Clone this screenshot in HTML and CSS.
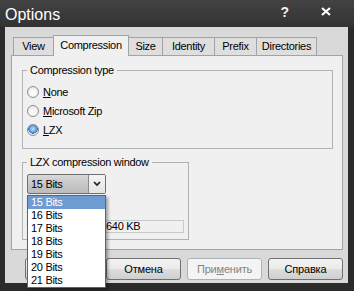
FILE: index.html
```html
<!DOCTYPE html>
<html lang="en">
<head>
    <meta charset="UTF-8">
    <title>Options</title>
    <link rel="stylesheet" href="styles.css">
</head>
<body>

<div class="window">
    <div class="titlebar">
        <span class="title">Options</span>
        <span class="caption-help">?</span>
        <span class="caption-close">
            <svg width="10" height="9" viewBox="0 0 10 9">
                <path d="M1 1 L9 8 M9 1 L1 8" stroke="#fff" stroke-width="2.2" fill="none"/>
            </svg>
        </span>
    </div>

    <div class="client">
        <div class="tabs">
            <div class="tab tab-view">View</div>
            <div class="tab tab-compression tab-active">Compression</div>
            <div class="tab tab-size">Size</div>
            <div class="tab tab-identity">Identity</div>
            <div class="tab tab-prefix">Prefix</div>
            <div class="tab tab-dirs">Directories</div>
        </div>

        <div class="panel">
            <fieldset class="group group-type">
                <legend>Compression type</legend>
                <div class="radio-row"><span class="radio"></span><span><u>N</u>one</span></div>
                <div class="radio-row"><span class="radio"></span><span><u>M</u>icrosoft Zip</span></div>
                <div class="radio-row"><span class="radio radio-checked"></span><span><u>L</u>ZX</span></div>
            </fieldset>

            <fieldset class="group group-window">
                <legend>LZX compression window</legend>
                <div class="combo-wrap">
                    <div class="combo">
                        <span class="combo-text">15 Bits</span>
                        <span class="combo-btn">
                            <svg width="8" height="6" viewBox="0 0 8 6">
                                <path d="M1 1 L4 4 L7 1" stroke="#1e1e1e" stroke-width="1.7" fill="none"/>
                            </svg>
                        </span>
                    </div>
                    <ul class="combo-list">
                        <li class="selected">15 Bits</li>
                        <li>16 Bits</li>
                        <li>17 Bits</li>
                        <li>18 Bits</li>
                        <li>19 Bits</li>
                        <li>20 Bits</li>
                        <li>21 Bits</li>
                    </ul>
                </div>
                <div class="size-field">640 KB</div>
            </fieldset>
        </div>

        <div class="buttons">
            <button class="btn">OK</button>
            <button class="btn">Отмена</button>
            <button class="btn btn-disabled">При<u>м</u>енить</button>
            <button class="btn">Справка</button>
        </div>
    </div>
</div>

</body>
</html>
```

FILE: styles.css
```css
body {
    margin: 0;
    background: #2d2d2d;
    font-family: 'Liberation Sans', Arial, sans-serif;
    font-size: 11px;
    color: #000;
}

.window {
    width: 354px;
    height: 291px;
    background: #2b2b2b;
    box-sizing: border-box;
}

.titlebar {
    height: 27px;
    display: flex;
    align-items: flex-start;
    background: linear-gradient(#434343, #323232);
    color: #fff;
}

.title {
    font-size: 16px;
    line-height: 25px;
    padding: 2px 0 0 5px;
}

.caption-help {
    margin-left: auto;
    font-size: 14px;
    font-weight: bold;
    line-height: 14px;
    padding-top: 5px;
    color: #f2f2f2;
}

.caption-close {
    margin: 7px 23px 0 32px;
    display: flex;
}

.client {
    margin: 0 6px 0 5px;
    height: 256px;
    background: #d9d9d9;
    padding: 8px 5px 0 6px;
    box-sizing: border-box;
}

.tabs {
    display: flex;
    align-items: flex-end;
    height: 20px;
    padding-left: 2px;
    letter-spacing: -0.3px;
}

.tab {
    box-sizing: border-box;
    height: 18px;
    line-height: 17px;
    text-align: center;
    border: 1px solid #a3a3a3;
    border-bottom: none;
    background: #dedede;
    margin-left: -1px;
}

.tab-view { width: 41px; margin-left: 0; }
.tab-compression { width: 76px; }
.tab-size { width: 35px; }
.tab-identity { width: 53px; }
.tab-prefix { width: 43px; }
.tab-dirs { width: 61px; }

.tab-active {
    height: 21px;
    line-height: 18px;
    margin-bottom: -1px;
    background: #f0f0f0;
    position: relative;
    z-index: 1;
}

.panel {
    height: 195px;
    box-sizing: border-box;
    border: 1px solid #a3a3a3;
    background: #f0f0f0;
    padding: 8px 0 0 10px;
}

.group {
    margin: 0;
    box-sizing: border-box;
    border: 1px solid #b2b2b2;
    padding: 5px 0 9px 4px;
    letter-spacing: -0.3px;
}

.group legend {
    padding: 0 3px;
    line-height: 13px;
}

.group-type {
    width: 311px;
}

.group-window {
    width: 167px;
    margin-top: 7px;
    padding-bottom: 6px;
}

.radio-row {
    display: flex;
    align-items: center;
    height: 19px;
    gap: 4px;
}

.radio-row u,
.btn u {
    text-decoration-thickness: 1px;
    text-underline-offset: 1px;
}

.radio {
    width: 12px;
    height: 12px;
    box-sizing: border-box;
    border: 1px solid #8e8f8f;
    border-radius: 50%;
    background: radial-gradient(circle at 50% 60%, #fafafa 30%, #dcdcdc 100%);
}

.radio-checked {
    background:
        radial-gradient(circle at 50% 40%, #bfe0ff 0%, #5d9be0 45%, #2b6fc1 58%, transparent 62%),
        radial-gradient(circle at 50% 60%, #fafafa 30%, #dcdcdc 100%);
}

.combo-wrap {
    position: relative;
    width: 79px;
}

.combo {
    height: 20px;
    box-sizing: border-box;
    border: 1px solid #707070;
    border-radius: 2px;
    display: flex;
    background: linear-gradient(#d8d8d8, #c4c4c4 60%, #bcbcbc);
}

.combo-text {
    flex: 1;
    line-height: 18px;
    padding-left: 3px;
}

.combo-btn {
    width: 16px;
    border-left: 1px solid #8a8a8a;
    background: linear-gradient(#f4f4f4, #e4e4e4);
    display: flex;
    align-items: center;
    justify-content: center;
}

.combo-list {
    position: absolute;
    top: 21px;
    left: 0;
    width: 79px;
    margin: 0;
    padding: 0;
    list-style: none;
    box-sizing: border-box;
    border: 1px solid #646464;
    background: #fff;
    box-shadow: 2px 2px 3px rgba(0, 0, 0, 0.35);
    z-index: 5;
}

.combo-list li {
    height: 13px;
    line-height: 13px;
    padding-left: 3px;
}

.combo-list li.selected {
    background: #6d9bd2;
    color: #fff;
}

.size-field {
    margin: 26px 0 0 77px;
    width: 80px;
    height: 13px;
    box-sizing: border-box;
    border: 1px solid #c9c9c9;
    line-height: 11px;
    padding-left: 1px;
}

.buttons {
    display: flex;
    justify-content: flex-end;
    gap: 6px;
    margin-top: 8px;
}

.btn {
    width: 75px;
    height: 22px;
    padding: 0;
    font-family: 'Liberation Sans', Arial, sans-serif;
    font-size: 11px;
    letter-spacing: -0.2px;
    color: #000;
    border: 1px solid #707070;
    border-radius: 3px;
    background: linear-gradient(#f2f2f2 0%, #ebebeb 48%, #dddddd 52%, #cfcfcf 100%);
}

.btn-disabled {
    color: #838383;
    border-color: #adb2b5;
    background: #f4f4f4;
}
```
